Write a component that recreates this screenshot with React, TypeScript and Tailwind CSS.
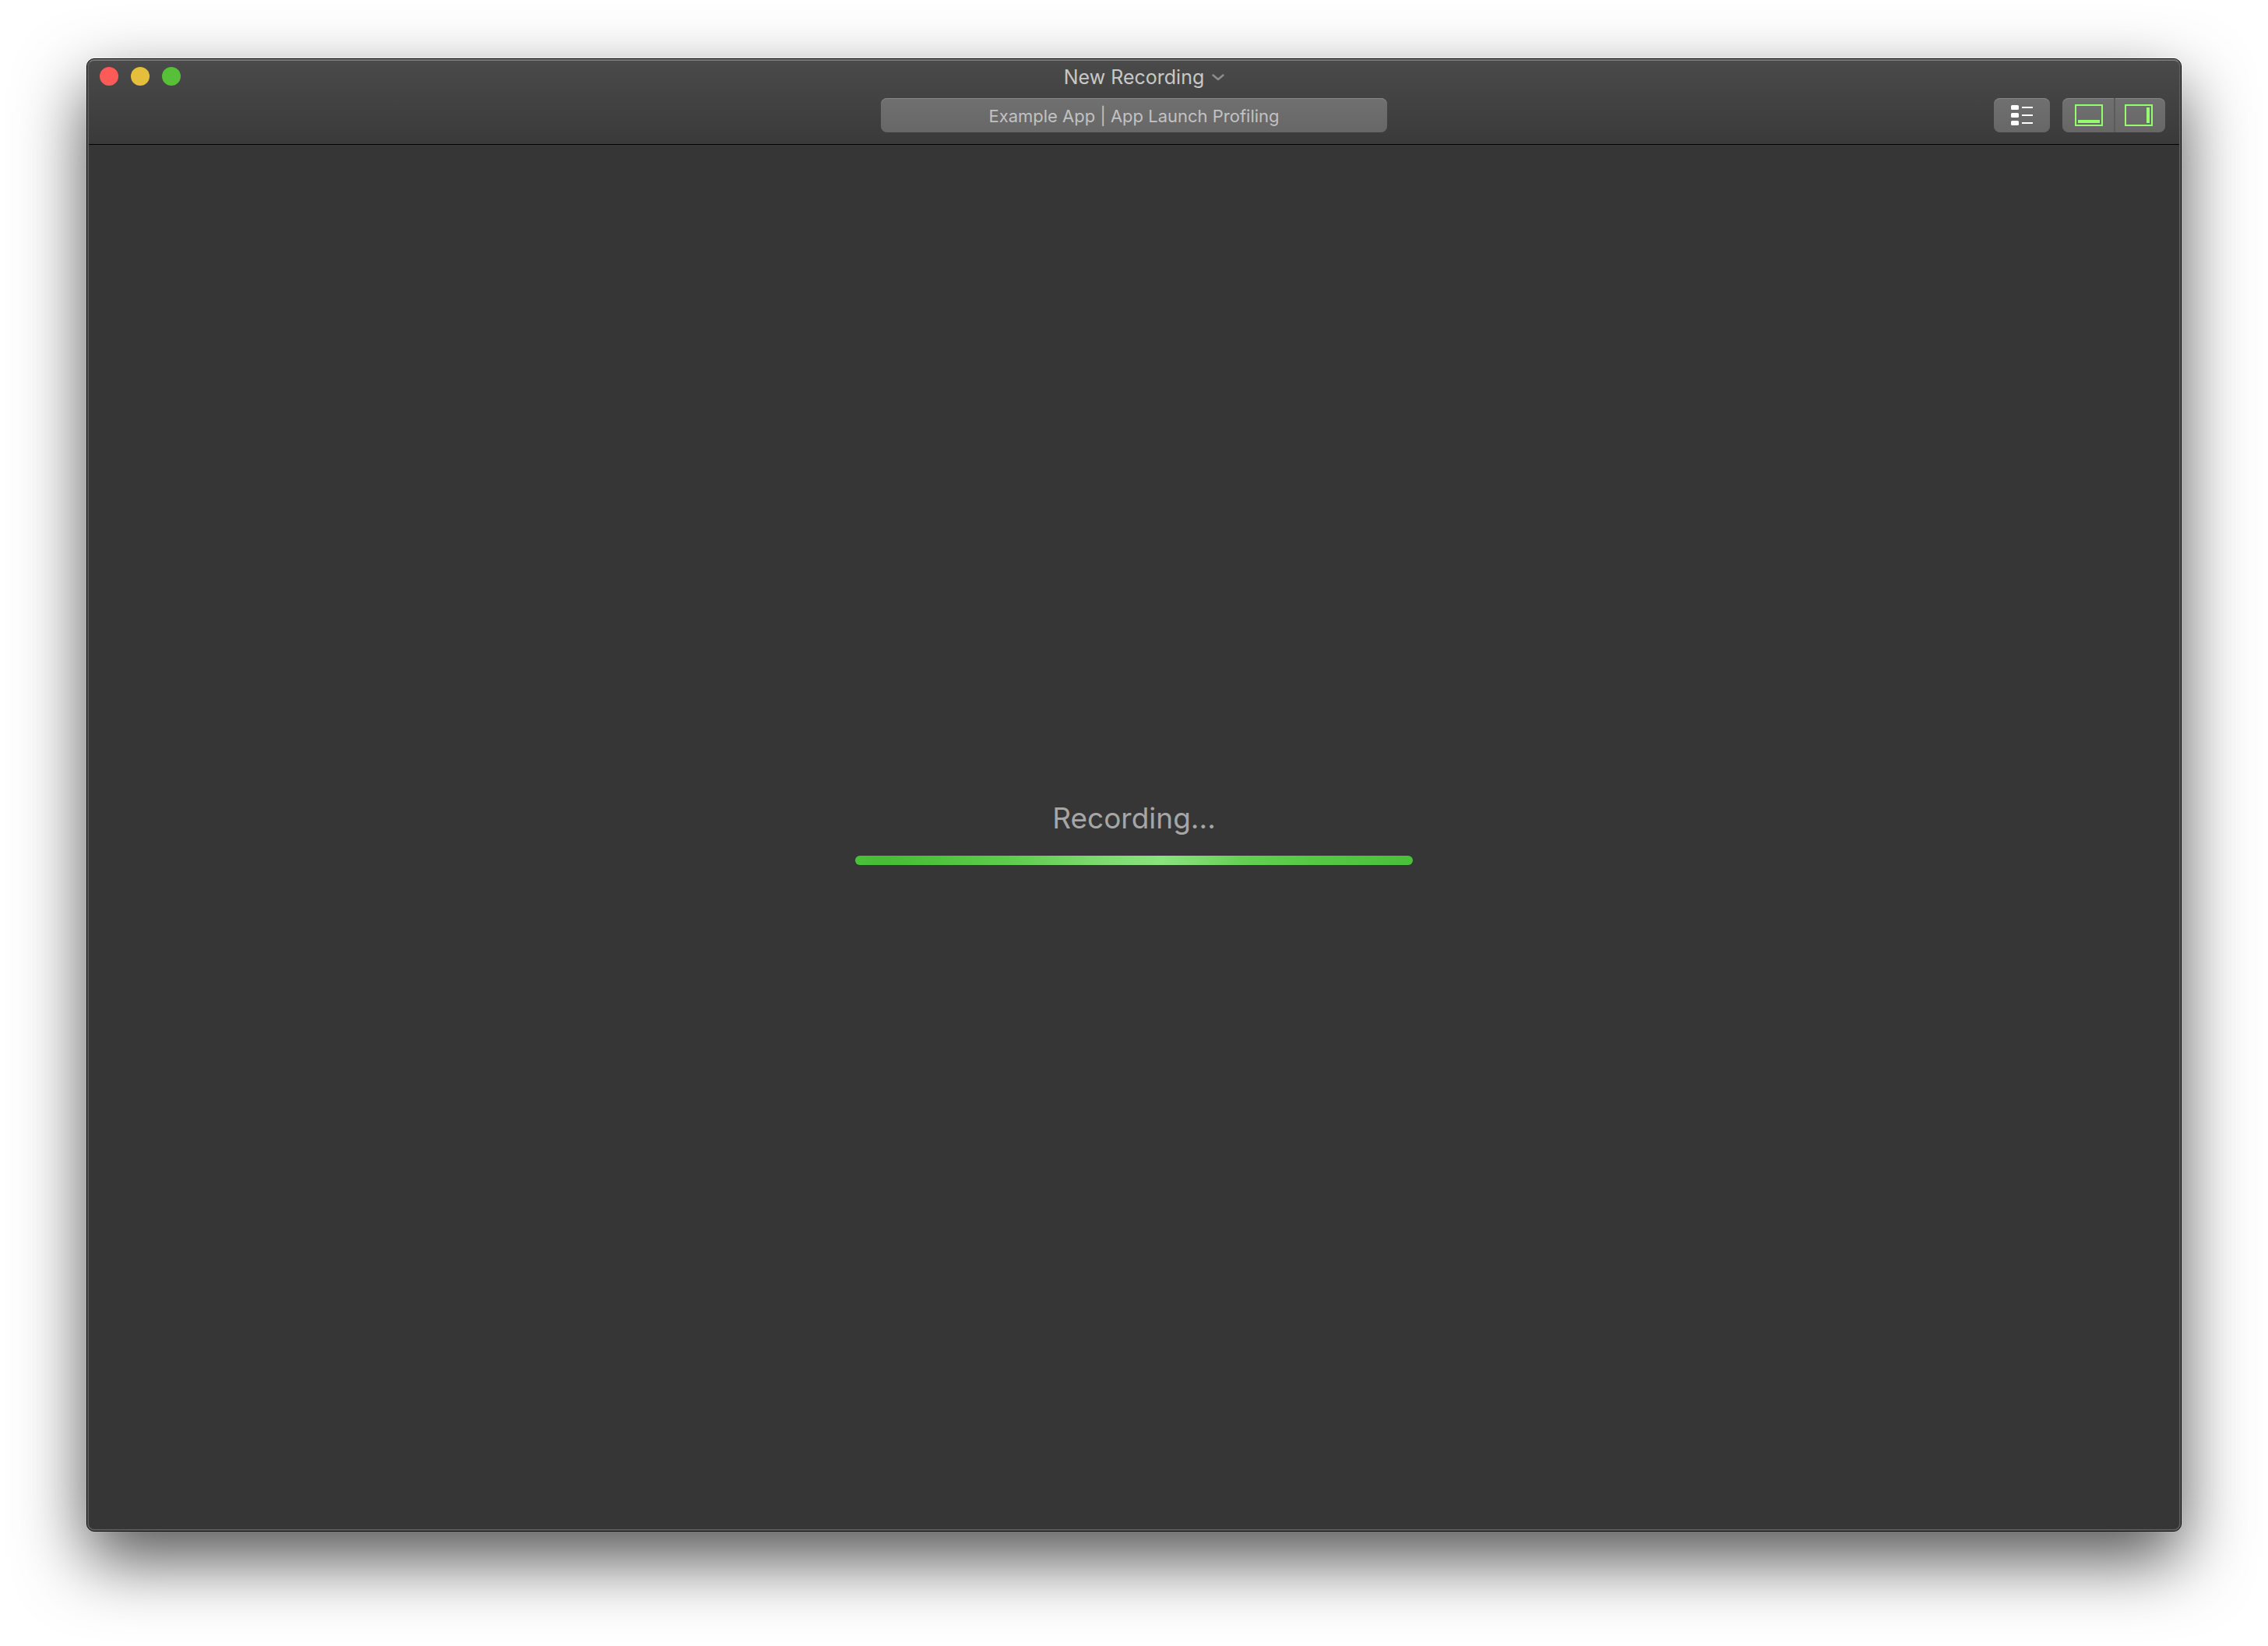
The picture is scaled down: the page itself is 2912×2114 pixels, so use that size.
import React from "react";

function TrafficLights() {
  return (
    <div className="flex gap-4">
      <button aria-label="Close" className="size-6 rounded-full bg-[#fc5b57]" />
      <button aria-label="Minimize" className="size-6 rounded-full bg-[#e5bf3c]" />
      <button aria-label="Zoom" className="size-6 rounded-full bg-[#57c038]" />
    </div>
  );
}

function ListIcon() {
  return (
    <svg width="28" height="26" viewBox="0 0 28 26" fill="#ffffff" aria-hidden="true">
      {[0, 10, 20].map((y) => (
        <g key={y}>
          <rect x="0" y={y} width="10" height="6" rx="1.5" />
          <rect x="14" y={y + 2} width="14" height="2" />
        </g>
      ))}
    </svg>
  );
}

function PaneIcon({ side }: { side: "bottom" | "right" }) {
  return (
    <svg width="36" height="28" viewBox="0 0 36 28" aria-hidden="true">
      <rect x="1" y="1" width="34" height="26" fill="none" stroke="#97fb70" strokeWidth="2" />
      {side === "bottom" ? (
        <rect x="4" y="20" width="28" height="4" fill="#97fb70" />
      ) : (
        <rect x="28" y="4" width="4" height="20" fill="#97fb70" />
      )}
    </svg>
  );
}

function TitleBar() {
  return (
    <header className="border-b border-black bg-linear-to-b from-[#4a4a4a] to-[#3a3a3a] px-3.5 pt-2 pb-[15px]">
      <div className="grid h-6 grid-cols-[1fr_auto_1fr] items-center">
        <TrafficLights />
        <button className="relative flex h-6 items-center pt-0.5 text-[25px] leading-6 text-[#c8c8c8]">
          New Recording
          <svg
            className="absolute left-full ml-2.5"
            width="16"
            height="9"
            viewBox="0 0 16 9"
            fill="none"
            stroke="#8d8d8d"
            strokeWidth="2.4"
            strokeLinecap="round"
            strokeLinejoin="round"
            aria-hidden="true"
          >
            <path d="M1.5 1.5 8 7l6.5-5.5" />
          </svg>
        </button>
      </div>
      <div className="mt-4 grid grid-cols-[1fr_650px_1fr] items-center">
        <p className="col-start-2 h-11 rounded-lg bg-linear-to-b from-[#707070] to-[#676767] text-center text-[22px] leading-[46px] text-[#c2c2c2] shadow-[inset_0_1px_0_#858585]">
          Example App | App Launch Profiling
        </p>
        <div className="flex justify-end gap-4 pr-1">
          <button
            aria-label="Show track list"
            className="flex h-11 w-18 items-center justify-center rounded-lg bg-linear-to-b from-[#707070] to-[#676767] shadow-[inset_0_1px_0_#858585]"
          >
            <ListIcon />
          </button>
          <div className="flex h-11 w-33 rounded-lg bg-linear-to-b from-[#707070] to-[#676767] shadow-[inset_0_1px_0_#858585]">
            <button
              aria-label="Toggle bottom pane"
              className="flex flex-1 items-center justify-center border-r-2 border-[#5b5b5b] pl-0.5"
            >
              <PaneIcon side="bottom" />
            </button>
            <button aria-label="Toggle right pane" className="flex w-16 items-center justify-center pr-1">
              <PaneIcon side="right" />
            </button>
          </div>
        </div>
      </div>
    </header>
  );
}

function RecordingStatus() {
  return (
    <main className="flex flex-1 flex-col items-center justify-center gap-6 bg-[#363636] pb-3">
      <h1 id="status" className="text-[37px] leading-12 text-[#a6a6a6]">
        Recording...
      </h1>
      <div
        role="progressbar"
        aria-labelledby="status"
        className="h-3 w-[716px] rounded-full bg-[linear-gradient(90deg,#49c138_0%,#45be33_5%,#4dc53b_15%,#5dcd4c_28%,#7adb6b_43%,#88e47b_55%,#7adb6b_62%,#62d051_70%,#52c941_83%,#48c137_100%)]"
      />
    </main>
  );
}

export default function App() {
  return (
    <div className="flex min-h-screen bg-white px-[111px] pt-[75px] pb-[147px] font-['Inter',sans-serif]">
      <div className="flex flex-1 flex-col overflow-hidden rounded-[10px] border border-black bg-[#5c5c5c] shadow-[0_36px_88px_rgba(0,0,0,0.68)]">
        <div className="flex flex-1 flex-col overflow-hidden rounded-[9px] border-2 border-[#5c5c5c] border-t-[#7a7a7a]">
          <TitleBar />
          <RecordingStatus />
        </div>
      </div>
    </div>
  );
}
